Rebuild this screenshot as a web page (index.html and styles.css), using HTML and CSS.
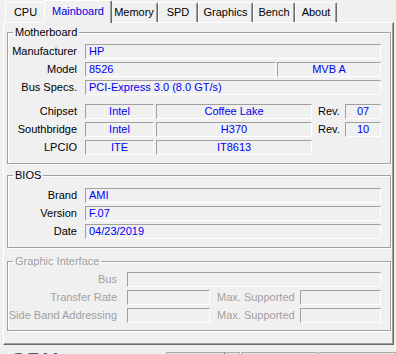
FILE: index.html
```html
<!DOCTYPE html>
<html lang="en">
<head>
    <meta charset="UTF-8">
    <meta name="viewport" content="width=device-width, initial-scale=1.0">
    <title>CPU-Z</title>
    <link rel="stylesheet" href="styles.css">
</head>
<body>
    <div class="tabs">
        <div class="tab tab-cpu">CPU</div>
        <div class="tab tab-active tab-mainboard">Mainboard</div>
        <div class="tab tab-memory">Memory</div>
        <div class="tab tab-spd">SPD</div>
        <div class="tab tab-graphics">Graphics</div>
        <div class="tab tab-bench">Bench</div>
        <div class="tab tab-about">About</div>
    </div>

    <div class="panel">
        <!-- Motherboard -->
        <fieldset class="group group-mb">
            <legend>Motherboard</legend>
            <div class="row">
                <span class="label">Manufacturer</span>
                <span class="field w-full">HP</span>
            </div>
            <div class="row">
                <span class="label">Model</span>
                <span class="field w-model">8526</span>
                <span class="field w-rev-model center">MVB A</span>
            </div>
            <div class="row">
                <span class="label">Bus Specs.</span>
                <span class="field w-full">PCI-Express 3.0 (8.0 GT/s)</span>
            </div>
            <div class="row row-chip">
                <span class="label">Chipset</span>
                <span class="field w-vendor center">Intel</span>
                <span class="field w-chip center">Coffee Lake</span>
                <span class="rev">Rev.</span>
                <span class="field w-revnum center">07</span>
            </div>
            <div class="row">
                <span class="label">Southbridge</span>
                <span class="field w-vendor center">Intel</span>
                <span class="field w-chip center">H370</span>
                <span class="rev">Rev.</span>
                <span class="field w-revnum center">10</span>
            </div>
            <div class="row">
                <span class="label">LPCIO</span>
                <span class="field w-vendor center">ITE</span>
                <span class="field w-chip center">IT8613</span>
            </div>
        </fieldset>

        <!-- BIOS -->
        <fieldset class="group group-bios">
            <legend>BIOS</legend>
            <div class="row">
                <span class="label">Brand</span>
                <span class="field w-full">AMI</span>
            </div>
            <div class="row">
                <span class="label">Version</span>
                <span class="field w-full">F.07</span>
            </div>
            <div class="row">
                <span class="label">Date</span>
                <span class="field w-full">04/23/2019</span>
            </div>
        </fieldset>

        <!-- Graphic Interface (disabled) -->
        <fieldset class="group group-gi disabled">
            <legend>Graphic Interface</legend>
            <div class="row">
                <span class="label label-wide">Bus</span>
                <span class="field w-bus"></span>
            </div>
            <div class="row">
                <span class="label label-wide">Transfer Rate</span>
                <span class="field w-rate"></span>
                <span class="max">Max. Supported</span>
                <span class="field w-max"></span>
            </div>
            <div class="row">
                <span class="label label-wide">Side Band Addressing</span>
                <span class="field w-rate"></span>
                <span class="max">Max. Supported</span>
                <span class="field w-max"></span>
            </div>
        </fieldset>
    </div>

    <div class="bottom">
        <span class="logo">CPU-Z</span>
        <div class="buttons">
            <span class="btn btn-tools">Tools<span class="drop"></span></span>
            <span class="btn btn-validate">Validate</span>
            <span class="btn btn-close">Close</span>
        </div>
    </div>
</body>
</html>
```

FILE: styles.css
```css
* {
    box-sizing: border-box;
}
body {
    margin: 0;
    width: 396px;
    height: 354px;
    overflow: hidden;
    background-color: #f0f0f0;
    font-family: "Liberation Sans", Arial, sans-serif;
    font-size: 11px;
    color: #000000;
}

/* tab strip */
.tabs {
    display: flex;
    align-items: flex-end;
    height: 22px;
    padding-left: 5px;
    position: relative;
    z-index: 2;
}
.tab {
    height: 20px;
    line-height: 18px;
    text-align: center;
    background-color: #f0f0f0;
    border-top: 1px solid #ffffff;
    border-left: 1px solid #ffffff;
    border-right: 1px solid #696969;
    box-shadow: inset -1px 0 0 #a0a0a0;
    border-radius: 2px 2px 0 0;
}
.tab-active {
    height: 23px;
    line-height: 20px;
    margin: 0 -2px -1px;
    color: #0000e0;
    position: relative;
    z-index: 3;
}
.tab-cpu { width: 41px; }
.tab-mainboard { width: 68px; }
.tab-memory { width: 48px; }
.tab-spd { width: 40px; }
.tab-graphics { width: 55px; }
.tab-bench { width: 42px; }
.tab-about { width: 42px; }

/* page */
.panel {
    margin-left: 3px;
    width: 391px;
    height: 323px;
    padding-top: 3px;
    border-top: 1px solid #ffffff;
    border-left: 1px solid #ffffff;
    border-right: 1px solid #696969;
    border-bottom: 1px solid #696969;
    box-shadow: inset -1px -1px 0 #a0a0a0;
    position: relative;
    z-index: 1;
}

/* group boxes */
.group {
    margin: 0 0 0 3px;
    width: 384px;
    padding: 5px 9px 8px 0;
    border: 1px solid #a0a0a0;
    box-shadow: 1px 1px 0 #ffffff, inset 1px 1px 0 #ffffff;
    min-width: 0;
}
.group legend {
    margin-left: 5px;
    padding: 0 2px;
    line-height: 13px;
}
.group-bios {
    margin-top: 5px;
    padding-top: 6px;
    padding-bottom: 8px;
}
.group-gi {
    margin-top: 7px;
    padding-top: 4px;
    padding-bottom: 7px;
}

.row {
    display: flex;
    height: 15px;
    margin-top: 3px;
    line-height: 15px;
    white-space: nowrap;
}
.row:first-of-type {
    margin-top: 0;
}
.row-chip {
    margin-top: 9px;
}
.label {
    width: 70px;
    padding-right: 1px;
    margin-right: 7px;
    text-align: right;
}
.label-wide {
    width: 110px;
    margin-right: 9px;
}

/* sunken value boxes */
.field {
    height: 15px;
    line-height: 13px;
    padding-left: 3px;
    border-top: 1px solid #a0a0a0;
    border-left: 1px solid #a0a0a0;
    border-bottom: 1px solid #ffffff;
    border-right: 1px solid #ffffff;
    color: #0000f0;
    overflow: hidden;
}
.center {
    text-align: center;
    padding-left: 0;
}
.w-full { width: 296px; }
.w-model { width: 191px; margin-right: 1px; }
.w-rev-model { width: 104px; }
.w-vendor { width: 69px; margin-right: 2px; }
.w-chip { width: 156px; }
.w-revnum { width: 36px; }
.rev {
    width: 27px;
    margin-left: 6px;
}
.w-bus { width: 254px; }
.w-rate { width: 83px; }
.w-max { width: 81px; }
.max {
    width: 76px;
    margin-left: 7px;
    margin-right: 7px;
}
.disabled,
.disabled legend {
    color: #a0a0a0;
}

/* bottom bar, cut off by the window */
.bottom {
    display: flex;
    align-items: flex-start;
    height: 40px;
    padding-top: 3px;
}
.logo {
    margin-left: 10px;
    font-size: 22px;
    font-weight: bold;
    line-height: 26px;
    color: #5a5a5a;
    letter-spacing: 1px;
}
.buttons {
    display: flex;
    margin-left: 88px;
    padding-top: 4px;
}
.btn {
    height: 23px;
    line-height: 30px;
    border: 1px solid #acacac;
    background-color: #e5e5e5;
    text-align: center;
}
.btn-tools {
    width: 74px;
    position: relative;
}
.drop {
    position: absolute;
    top: 0;
    right: 14px;
    height: 6px;
    border-left: 1px solid #707070;
}
.btn-validate {
    width: 77px;
    margin-left: 1px;
}
.btn-close {
    width: 77px;
    margin-left: 1px;
}
```
